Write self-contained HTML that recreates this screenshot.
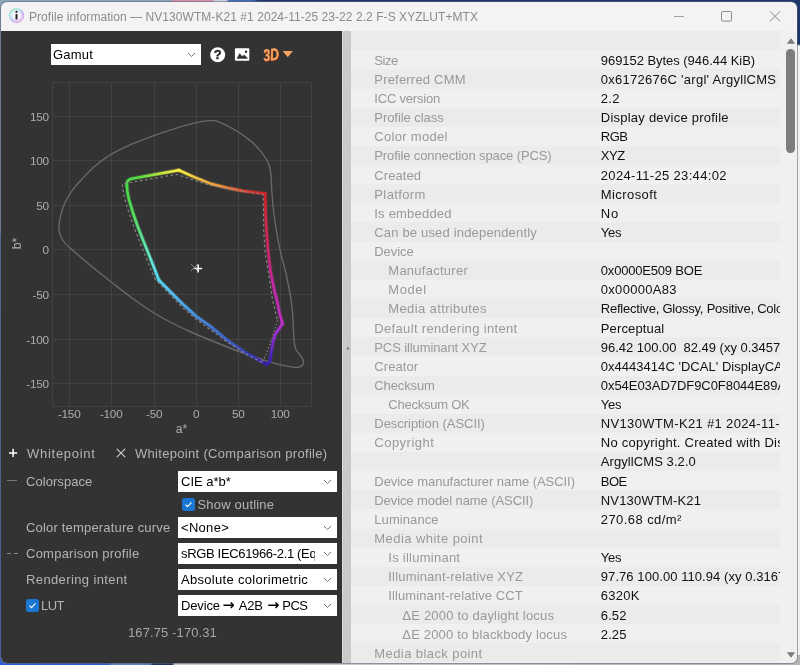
<!DOCTYPE html><html><head><meta charset="utf-8"><title>Profile information</title><style>

*{box-sizing:border-box;margin:0;padding:0}
html,body{width:800px;height:665px;overflow:hidden}
body{position:relative;font-family:"Liberation Sans",sans-serif;font-size:13px;background:#2a5db8;}
#root{position:absolute;left:0;top:0;width:800px;height:665px;will-change:transform}
.abs{position:absolute}
.t{position:absolute;white-space:pre;line-height:16px;height:16px}
#desk-top{left:0;top:0;width:800px;height:12px;background:linear-gradient(90deg,#8ca6b8 0,#8aa3b6 171px,#d48ea8 173px,#d690aa 212px,#cfd6e2 216px,#c8d2e0 226px,#4a74b4 229px,#3a66aa 254px,#1d3a70 258px,#1c376c 100%)}
#desk-left{left:0;top:0;width:12px;height:665px;background:linear-gradient(180deg,#8ca6b8 0,#8796a6 32px,#8a97a6 230px,#3f6fae 238px,#36659f 500px,#2c5fc4 600px,#2a5ccc 100%)}
#desk-right{left:790px;top:0;width:10px;height:665px;background:linear-gradient(180deg,#1c376c 0,#1b3366 44px,#f1f1f1 46px,#f1f1f1 100%)}
#desk-bottom{left:0;top:655px;width:800px;height:10px;background:linear-gradient(90deg,#2c60d0 0,#2a5cc8 108px,#5c82ba 112px,#5a80b8 150px,#1d2f5a 153px,#1d2f5a 172px,#cfcfcf 175px,#b4b4b4 100%)}
#win{border-radius:6px;background:#f4f2f2;overflow:hidden;box-shadow:0 0 0 1px rgba(90,100,120,.55)}
#title{left:28px;top:7px;color:#8b8b8b;font-size:12px;letter-spacing:.055px}
#left{left:0;width:341px;background:#333}
#sash{left:341px;width:9px;background:linear-gradient(90deg,#dcdcdc 0,#dcdcdc 1px,#c9c9c9 1px,#c9c9c9 100%)}
#right{left:350px;width:447px;background:#f0f0f0}
.lab{color:#b4b4b4}
.cb{position:absolute;background:#fff;height:21px;left:178px;width:159px;overflow:hidden}
.cb span{position:absolute;left:3px;top:2px;line-height:17px;color:#000;white-space:pre;font-size:13px}
.cb span.ar{font-family:"DejaVu Sans","Liberation Sans",sans-serif;font-weight:bold;font-size:14.5px;top:1.5px;letter-spacing:0}
.cb svg{position:absolute;right:5px;top:8px}
.cb i{position:absolute;right:0;top:0;width:22px;height:21px;background:#fff}
.chk{position:absolute;width:13px;height:13px;background:#1976d2;border-radius:2.5px}
.row{position:absolute;left:0;width:430px;}
.k{position:absolute;color:#999;white-space:pre;line-height:16px}
.v{position:absolute;color:#111;white-space:pre;line-height:16px;left:249.8px}

</style></head><body><div id="root">
<div class="abs" id="desk-top"></div><div class="abs" id="desk-left"></div><div class="abs" id="desk-right"></div><div class="abs" id="desk-bottom"></div>
<div class="abs" id="win" style="left:1px;top:2px;width:796px;height:661px">
<svg class="abs" style="left:7px;top:5px" width="17" height="17" viewBox="0 0 17 17"><defs><linearGradient id="ig" x1="0.1" y1="0" x2=".9" y2="1"><stop offset="0" stop-color="#9be89b"/><stop offset=".3" stop-color="#9adfe6"/><stop offset=".6" stop-color="#b9a6f0"/><stop offset="1" stop-color="#f5a6dc"/></linearGradient><radialGradient id="iw" cx=".5" cy=".5" r=".5"><stop offset="0" stop-color="#fff"/><stop offset=".55" stop-color="#fff" stop-opacity=".85"/><stop offset="1" stop-color="#fff" stop-opacity=".1"/></radialGradient></defs><circle cx="8.5" cy="8.5" r="7.6" fill="url(#ig)"/><circle cx="8.5" cy="8.5" r="7" fill="url(#iw)"/><circle cx="8.5" cy="4.9" r="1.15" fill="#222"/><rect x="7.5" y="7" width="2" height="5.6" rx=".5" fill="#222"/></svg>
<div class="t" id="title" style="left:28px;top:7px">Profile information — NV130WTM-K21 #1 2024-11-25 23-22 2.2 F-S XYZLUT+MTX</div>
<svg class="abs" style="left:659px;top:-1px" width="137" height="30" viewBox="0 0 137 30" fill="none" stroke="#8a8a8a" stroke-width="1"><path d="M14 15.5h10" stroke="#a0a0a0"/><rect x="61.5" y="10.5" width="10" height="9.6" rx="1.2"/><path d="M110 10.3l10 10M120 10.3l-10 10"/></svg>
<div class="abs" id="left" style="top:29px;height:632px"></div>
<div class="abs" id="sash" style="top:29px;height:632px"></div>
<div class="abs" id="right" style="top:29px;height:632px"></div>
</div>
<div class="cb" style="left:51px;top:44px;width:150px;height:21px"><span style="top:2px;left:2px;letter-spacing:0.23px">Gamut</span><i></i><svg width="9" height="6" viewBox="0 0 9 6" fill="none" stroke="#666" stroke-width="0.9"><path d="M1 1L4.5 4.5 8 1"/></svg></div>
<svg class="abs" style="left:209px;top:46px" width="18" height="18" viewBox="0 0 18 18"><circle cx="8.7" cy="8.8" r="7.5" fill="#fff"/><text x="8.7" y="13.3" font-family="Liberation Sans, sans-serif" font-weight="bold" font-size="13" text-anchor="middle" fill="#222" stroke="#222" stroke-width=".3">?</text></svg>
<svg class="abs" style="left:234px;top:48px" width="16" height="13" viewBox="0 0 16 13"><rect x=".9" y=".3" width="14.4" height="12.4" rx=".9" fill="#fff"/><path d="M3.1 10.4L5.7 5.5 7.9 8.5 10.4 7.1 13.6 10.4z" fill="#2e2e2e" stroke="#2e2e2e" stroke-width=".5" stroke-linejoin="round"/><circle cx="12" cy="3.8" r="1.25" fill="#2e2e2e"/></svg>
<svg class="abs" style="left:261px;top:45px" width="34" height="19" viewBox="0 0 34 19"><g font-family="Liberation Sans, sans-serif" font-weight="bold" font-style="italic" font-size="16.6" transform="rotate(-7 10 10)"><text x="2.9" y="16.1" fill="#7a2410" stroke="#7a2410" stroke-width=".6" textLength="15.6" lengthAdjust="spacingAndGlyphs">3D</text><text x="2.2" y="15.4" fill="#f6a260" stroke="#f6a260" stroke-width=".5" textLength="15.6" lengthAdjust="spacingAndGlyphs">3D</text></g><path d="M21.6 6.1h10.3l-5.15 6.1z" fill="#f6a260"/></svg>
<svg class="abs" style="left:0;top:70px" width="343" height="370" viewBox="0 70 343 370"><g stroke="#424242" stroke-width="1" fill="none" shape-rendering="crispEdges"><rect x="52.5" y="82.5" width="259" height="324"/><path d="M69.5 82V406"/><path d="M111.5 82V406"/><path d="M154.5 82V406"/><path d="M196.5 82V406"/><path d="M238.5 82V406"/><path d="M280.5 82V406"/><path d="M52 116.5H311"/><path d="M52 160.5H311"/><path d="M52 205.5H311"/><path d="M52 249.5H311"/><path d="M52 294.5H311"/><path d="M52 339.5H311"/><path d="M52 383.5H311"/></g><path d="M59.0 230.0C58.7 226.6 59.1 222.7 60.0 218.3C60.9 214.0 62.5 208.4 64.4 203.9C66.4 199.4 68.7 195.4 71.7 191.2C74.7 187.0 78.6 182.8 82.5 178.6C86.4 174.4 90.3 170.1 95.1 166.0C99.9 161.9 105.4 157.8 111.4 154.2C117.4 150.6 124.0 147.5 131.2 144.3C138.4 141.2 148.2 137.7 154.7 135.3C161.2 133.0 164.7 131.9 170.0 130.2C175.3 128.5 180.8 126.7 186.2 125.2C191.7 123.7 198.3 122.2 202.5 121.4C206.7 120.6 208.7 120.5 211.4 120.6C214.1 120.7 214.8 120.3 218.8 121.9C222.7 123.5 229.6 126.8 235.0 130.0C240.4 133.2 246.7 137.5 251.2 141.4C255.8 145.3 259.6 149.7 262.6 153.6C265.6 157.5 267.7 161.2 269.1 165.0C270.5 168.8 270.7 172.1 271.1 176.4C271.6 180.7 271.4 185.1 271.8 191.0C272.2 196.9 272.9 205.0 273.7 212.0C274.5 219.0 275.6 226.0 276.8 233.0C278.0 240.0 279.4 247.0 281.0 254.0C282.6 261.0 284.7 267.7 286.3 275.0C287.9 282.3 289.8 291.8 290.8 298.0C291.8 304.2 292.1 307.0 292.5 312.5C292.9 318.0 293.2 326.0 293.5 331.2C293.8 336.5 293.9 340.6 294.4 343.8C294.9 346.9 295.3 348.1 296.2 350.0C297.2 351.9 298.9 353.3 300.0 355.0C301.1 356.7 302.6 358.4 303.1 360.0C303.6 361.6 303.8 363.2 303.1 364.4C302.4 365.6 300.7 366.8 298.8 367.2C296.8 367.7 294.6 367.4 291.2 366.9C287.9 366.4 284.0 365.8 278.8 364.4C273.5 363.0 267.3 361.1 260.0 358.8C252.7 356.4 243.3 353.1 235.0 350.0C226.7 346.9 217.5 343.1 210.0 340.0C202.5 336.9 196.7 334.5 190.0 331.5C183.3 328.5 176.7 325.5 170.0 322.0C163.3 318.5 156.7 314.8 150.0 310.5C143.3 306.2 136.7 301.4 130.0 296.5C123.3 291.6 116.7 286.2 110.0 281.0C103.3 275.8 96.7 270.5 90.0 265.0C83.3 259.5 74.7 252.3 70.0 248.0C65.3 243.7 63.8 242.0 62.0 239.0C60.2 236.0 59.3 233.4 59.0 230.0Z" fill="none" stroke="#686868" stroke-width="1.4"/><defs><linearGradient id="s0" gradientUnits="userSpaceOnUse" x1="126.9" y1="186" x2="178.8" y2="170.2"><stop offset="0.000" stop-color="#4ad84a"/><stop offset="0.250" stop-color="#55dc44"/><stop offset="0.500" stop-color="#8ee23e"/><stop offset="0.750" stop-color="#cfe840"/><stop offset="1.000" stop-color="#f8f040"/></linearGradient><linearGradient id="s1" gradientUnits="userSpaceOnUse" x1="178.8" y1="170.2" x2="265.2" y2="193.6"><stop offset="0.000" stop-color="#f8f040"/><stop offset="0.167" stop-color="#f2d040"/><stop offset="0.333" stop-color="#f0b040"/><stop offset="0.500" stop-color="#f09038"/><stop offset="0.667" stop-color="#e86838"/><stop offset="0.833" stop-color="#da3430"/><stop offset="1.000" stop-color="#cc2428"/></linearGradient><linearGradient id="s2" gradientUnits="userSpaceOnUse" x1="265.2" y1="193.6" x2="282.5" y2="323.75"><stop offset="0.000" stop-color="#cc2428"/><stop offset="0.167" stop-color="#d02840"/><stop offset="0.333" stop-color="#cc2858"/><stop offset="0.500" stop-color="#c82878"/><stop offset="0.667" stop-color="#c828a0"/><stop offset="0.833" stop-color="#c42cb4"/><stop offset="1.000" stop-color="#bc2ec4"/></linearGradient><linearGradient id="s3" gradientUnits="userSpaceOnUse" x1="282.5" y1="323.75" x2="266.9" y2="364.4"><stop offset="0.000" stop-color="#ba2ec6"/><stop offset="0.200" stop-color="#a030d0"/><stop offset="0.400" stop-color="#8a2cd0"/><stop offset="0.600" stop-color="#7028c8"/><stop offset="0.800" stop-color="#4a22bc"/><stop offset="1.000" stop-color="#3820b0"/></linearGradient><linearGradient id="s4" gradientUnits="userSpaceOnUse" x1="266.9" y1="364.4" x2="158.75" y2="280"><stop offset="0.000" stop-color="#3820b4"/><stop offset="0.143" stop-color="#3838bc"/><stop offset="0.286" stop-color="#3c58c8"/><stop offset="0.429" stop-color="#4070d2"/><stop offset="0.571" stop-color="#4688de"/><stop offset="0.714" stop-color="#4ca4ea"/><stop offset="0.857" stop-color="#50c0f0"/><stop offset="1.000" stop-color="#54d4f0"/></linearGradient><linearGradient id="s5" gradientUnits="userSpaceOnUse" x1="158.75" y1="280" x2="126.9" y2="186"><stop offset="0.000" stop-color="#58d8f0"/><stop offset="0.143" stop-color="#60e2e0"/><stop offset="0.286" stop-color="#66e8c0"/><stop offset="0.429" stop-color="#60e8a0"/><stop offset="0.571" stop-color="#58e278"/><stop offset="0.714" stop-color="#56e05c"/><stop offset="0.857" stop-color="#4edc50"/><stop offset="1.000" stop-color="#4ad84a"/></linearGradient></defs><path d="M126.9 186.0 L126.8 183.0 L127.6 181.0 L129.6 179.4 L131.2 178.8 L155.0 174.4 L178.8 170.2" fill="none" stroke="url(#s0)" stroke-opacity=".28" stroke-width="4.4" stroke-linecap="round" stroke-linejoin="round"/><path d="M178.8 170.2 L194.4 177.2 L210.6 183.7 L226.9 187.8 L243.1 191.0 L259.4 193.0 L265.2 193.6" fill="none" stroke="url(#s1)" stroke-opacity=".28" stroke-width="4.4" stroke-linecap="round" stroke-linejoin="round"/><path d="M265.2 193.6 L265.5 212.0 L266.7 233.0 L268.0 250.0 L270.5 271.0 L274.7 292.0 L276.9 300.0 L279.4 312.5 L282.5 323.8" fill="none" stroke="url(#s2)" stroke-opacity=".28" stroke-width="4.4" stroke-linecap="round" stroke-linejoin="round"/><path d="M282.5 323.8 L275.6 333.8 L273.1 341.2 L271.2 352.5 L270.0 361.2 L266.9 364.4" fill="none" stroke="url(#s3)" stroke-opacity=".28" stroke-width="4.4" stroke-linecap="round" stroke-linejoin="round"/><path d="M266.9 364.4 L247.5 353.8 L228.8 341.2 L210.0 326.0 L196.2 316.2 L183.8 305.0 L171.2 292.5 L158.8 280.0" fill="none" stroke="url(#s4)" stroke-opacity=".28" stroke-width="4.4" stroke-linecap="round" stroke-linejoin="round"/><path d="M158.8 280.0 L154.1 267.7 L148.7 254.1 L143.3 240.6 L137.9 227.0 L133.2 213.5 L129.1 200.0 L127.5 192.5 L126.9 186.0" fill="none" stroke="url(#s5)" stroke-opacity=".28" stroke-width="4.4" stroke-linecap="round" stroke-linejoin="round"/><path d="M126.9 186.0 L126.8 183.0 L127.6 181.0 L129.6 179.4 L131.2 178.8 L155.0 174.4 L178.8 170.2" fill="none" stroke="url(#s0)" stroke-width="2.5" stroke-linecap="round" stroke-linejoin="round"/><path d="M178.8 170.2 L194.4 177.2 L210.6 183.7 L226.9 187.8 L243.1 191.0 L259.4 193.0 L265.2 193.6" fill="none" stroke="url(#s1)" stroke-width="2.5" stroke-linecap="round" stroke-linejoin="round"/><path d="M265.2 193.6 L265.5 212.0 L266.7 233.0 L268.0 250.0 L270.5 271.0 L274.7 292.0 L276.9 300.0 L279.4 312.5 L282.5 323.8" fill="none" stroke="url(#s2)" stroke-width="2.5" stroke-linecap="round" stroke-linejoin="round"/><path d="M282.5 323.8 L275.6 333.8 L273.1 341.2 L271.2 352.5 L270.0 361.2 L266.9 364.4" fill="none" stroke="url(#s3)" stroke-width="2.5" stroke-linecap="round" stroke-linejoin="round"/><path d="M266.9 364.4 L247.5 353.8 L228.8 341.2 L210.0 326.0 L196.2 316.2 L183.8 305.0 L171.2 292.5 L158.8 280.0" fill="none" stroke="url(#s4)" stroke-width="2.5" stroke-linecap="round" stroke-linejoin="round"/><path d="M158.8 280.0 L154.1 267.7 L148.7 254.1 L143.3 240.6 L137.9 227.0 L133.2 213.5 L129.1 200.0 L127.5 192.5 L126.9 186.0" fill="none" stroke="url(#s5)" stroke-width="2.5" stroke-linecap="round" stroke-linejoin="round"/><path d="M155.5 279.8 L150.1 267.7 L144.7 254.1 L139.2 240.6 L133.8 227.0 L129.1 213.5 L125.0 200.0 L123.1 191.2 L122.3 184.0 L176.2 174.4 L182.5 176.2 L195.0 180.6 L210.0 185.0 L236.0 190.5 L263.2 194.4 L263.8 233.0 L265.3 254.0 L268.8 275.0 L272.6 300.5 L277.5 320.6" fill="none" stroke="#8a8a8a" stroke-width="1.1" stroke-dasharray="2.6 2.6"/><path d="M262.0 362.5 L247.5 355.0 L228.8 343.0 L210.0 329.4 L196.0 319.0 L183.0 308.0 L171.2 295.6 L155.5 279.8" fill="none" stroke="#8a8a8a" stroke-width="1.1" stroke-dasharray="2.6 2.6"/><path d="M277.5 320.6L271.5 340 267 352 262 362.5" fill="none" stroke="#8a8a8a" stroke-width="1.1" stroke-dasharray="1.3 2.2"/><path d="M190.9 264l7 7M197.9 264l-7 7" stroke="#8c8c8c" stroke-width="1" fill="none"/><path d="M198.2 264.4v8.2M194.3 268.5h7.8" stroke="#fff" stroke-width="1.6" fill="none"/><g font-family="Liberation Sans, sans-serif" font-size="11.8" letter-spacing="-.3" fill="#adadad"><text x="48.7" y="120.7" text-anchor="end">150</text><text x="48.7" y="164.7" text-anchor="end">100</text><text x="48.7" y="209.7" text-anchor="end">50</text><text x="48.7" y="253.7" text-anchor="end">0</text><text x="48.7" y="298.7" text-anchor="end">-50</text><text x="48.7" y="343.7" text-anchor="end">-100</text><text x="48.7" y="387.7" text-anchor="end">-150</text><text x="69.2" y="417.8" text-anchor="middle">-150</text><text x="111.2" y="417.8" text-anchor="middle">-100</text><text x="154.2" y="417.8" text-anchor="middle">-50</text><text x="196.2" y="417.8" text-anchor="middle">0</text><text x="238.2" y="417.8" text-anchor="middle">50</text><text x="280.2" y="417.8" text-anchor="middle">100</text><text x="181.6" y="432.6" text-anchor="middle" font-size="12.3" letter-spacing="0">a*</text><text transform="translate(20.6 243.5) rotate(-90)" text-anchor="middle" font-size="12.3" letter-spacing="0">b*</text></g></svg>
<svg class="abs" style="left:8px;top:448px" width="10" height="10" viewBox="0 0 10 10"><path d="M5.1 .8v8.2M1 4.9h8.2" stroke="#fff" stroke-width="1.5"/></svg>
<div class="t lab" style="left:27px;top:445.5px;letter-spacing:0.724px;">Whitepoint</div>
<svg class="abs" style="left:115.6px;top:448.4px" width="10" height="10" viewBox="0 0 10 10"><path d="M.8.8l8.4 8.4M9.2.8L.8 9.2" stroke="#d0d0d0" stroke-width="1.15"/></svg>
<div class="t lab" style="left:135px;top:445.5px;letter-spacing:0.312px;">Whitepoint (Comparison profile)</div>
<div class="abs" style="left:7px;top:480px;width:10px;height:1px;background:#777"></div>
<div class="t lab" style="left:26px;top:473.5px;letter-spacing:0.056px;">Colorspace</div>
<div class="cb" style="top:471px"><span style="letter-spacing:-0.01px">CIE a*b*</span><i></i><svg width="9" height="6" viewBox="0 0 9 6" fill="none" stroke="#666" stroke-width="0.9"><path d="M1 1L4.5 4.5 8 1"/></svg></div>
<div class="chk" style="left:182px;top:498px"><svg width="13" height="13" viewBox="0 0 13 13" style="display:block"><path d="M3.5 6.6l2 2 4-4.2" fill="none" stroke="#fff" stroke-width="1.1"/></svg></div>
<div class="t lab" style="left:197.5px;top:497px;letter-spacing:0.187px;">Show outline</div>
<div class="t lab" style="left:26px;top:520px;letter-spacing:0.183px;">Color temperature curve</div>
<div class="cb" style="top:517px"><span style="letter-spacing:0.297px">&lt;None&gt;</span><i></i><svg width="9" height="6" viewBox="0 0 9 6" fill="none" stroke="#666" stroke-width="0.9"><path d="M1 1L4.5 4.5 8 1"/></svg></div>
<div class="abs" style="left:7px;top:553px;width:4px;height:1px;background:#888"></div><div class="abs" style="left:14px;top:553px;width:4px;height:1px;background:#888"></div>
<div class="t lab" style="left:26px;top:545.7px;letter-spacing:0.239px;">Comparison profile</div>
<div class="cb" style="top:543px"><span style="letter-spacing:-0.335px">sRGB IEC61966-2.1 (Equivalent</span><i></i><svg width="9" height="6" viewBox="0 0 9 6" fill="none" stroke="#666" stroke-width="0.9"><path d="M1 1L4.5 4.5 8 1"/></svg></div>
<div class="t lab" style="left:26px;top:571.5px;letter-spacing:0.38px;">Rendering intent</div>
<div class="cb" style="top:569px"><span style="letter-spacing:0.309px">Absolute colorimetric</span><i></i><svg width="9" height="6" viewBox="0 0 9 6" fill="none" stroke="#666" stroke-width="0.9"><path d="M1 1L4.5 4.5 8 1"/></svg></div>
<div class="chk" style="left:26px;top:599px"><svg width="13" height="13" viewBox="0 0 13 13" style="display:block"><path d="M3.5 6.6l2 2 4-4.2" fill="none" stroke="#fff" stroke-width="1.1"/></svg></div>
<div class="t lab" style="left:41px;top:598px;letter-spacing:-0.5px;">LUT</div>
<div class="cb" style="top:595px"><span style="letter-spacing:-0.155px">Device</span><span class="ar" style="left:44.4px">→</span><span style="left:60.7px;letter-spacing:-0.111px">A2B</span><span class="ar" style="left:89.2px">→</span><span style="left:104.3px;letter-spacing:-0.5px">PCS</span><i></i><svg width="9" height="6" viewBox="0 0 9 6" fill="none" stroke="#666" stroke-width="0.9"><path d="M1 1L4.5 4.5 8 1"/></svg></div>
<div class="t lab" style="left:128px;top:624.7px;letter-spacing:0.106px;color:#a6a6a6">167.75 -170.31</div>
<div class="abs" style="left:351px;top:31px;width:429px;height:632px;overflow:hidden">
<div class="row" style="top:0.17px;height:19.18px;background:#ebebeb"></div>
<div class="row" style="top:19.30px;height:19.18px;background:#f0f0f0"></div>
<div class="row" style="top:38.43px;height:19.18px;background:#ebebeb"></div>
<div class="row" style="top:57.56px;height:19.18px;background:#f0f0f0"></div>
<div class="row" style="top:76.69px;height:19.18px;background:#ebebeb"></div>
<div class="row" style="top:95.82px;height:19.18px;background:#f0f0f0"></div>
<div class="row" style="top:114.95px;height:19.18px;background:#ebebeb"></div>
<div class="row" style="top:134.08px;height:19.18px;background:#f0f0f0"></div>
<div class="row" style="top:153.21px;height:19.18px;background:#ebebeb"></div>
<div class="row" style="top:172.34px;height:19.18px;background:#f0f0f0"></div>
<div class="row" style="top:191.47px;height:19.18px;background:#ebebeb"></div>
<div class="row" style="top:210.60px;height:19.18px;background:#f0f0f0"></div>
<div class="row" style="top:229.73px;height:19.18px;background:#ebebeb"></div>
<div class="row" style="top:248.86px;height:19.18px;background:#f0f0f0"></div>
<div class="row" style="top:267.99px;height:19.18px;background:#ebebeb"></div>
<div class="row" style="top:287.12px;height:19.18px;background:#f0f0f0"></div>
<div class="row" style="top:306.25px;height:19.18px;background:#ebebeb"></div>
<div class="row" style="top:325.38px;height:19.18px;background:#f0f0f0"></div>
<div class="row" style="top:344.51px;height:19.18px;background:#ebebeb"></div>
<div class="row" style="top:363.64px;height:19.18px;background:#f0f0f0"></div>
<div class="row" style="top:382.77px;height:19.18px;background:#ebebeb"></div>
<div class="row" style="top:401.90px;height:19.18px;background:#f0f0f0"></div>
<div class="row" style="top:421.03px;height:19.18px;background:#ebebeb"></div>
<div class="row" style="top:440.16px;height:19.18px;background:#f0f0f0"></div>
<div class="row" style="top:459.29px;height:19.18px;background:#ebebeb"></div>
<div class="row" style="top:478.42px;height:19.18px;background:#f0f0f0"></div>
<div class="row" style="top:497.55px;height:19.18px;background:#ebebeb"></div>
<div class="row" style="top:516.68px;height:19.18px;background:#f0f0f0"></div>
<div class="row" style="top:535.81px;height:19.18px;background:#ebebeb"></div>
<div class="row" style="top:554.94px;height:19.18px;background:#f0f0f0"></div>
<div class="row" style="top:574.07px;height:19.18px;background:#ebebeb"></div>
<div class="row" style="top:593.20px;height:19.18px;background:#f0f0f0"></div>
<div class="row" style="top:612.33px;height:19.18px;background:#ebebeb"></div>
<div class="row" style="top:631.46px;height:19.18px;background:#f0f0f0"></div>
<div class="k" style="left:23.3px;top:21.76px;letter-spacing:-0.428px">Size</div>
<div class="v" style="top:21.76px;letter-spacing:-0.045px">969152 Bytes (946.44 KiB)</div>
<div class="k" style="left:23.3px;top:40.89px;letter-spacing:0.195px">Preferred CMM</div>
<div class="v" style="top:40.89px;letter-spacing:0.265px">0x6172676C 'argl' ArgyllCMS</div>
<div class="k" style="left:23.3px;top:60.02px;letter-spacing:-0.202px">ICC version</div>
<div class="v" style="top:60.02px;letter-spacing:0.289px">2.2</div>
<div class="k" style="left:23.3px;top:79.16px;letter-spacing:-0.062px">Profile class</div>
<div class="v" style="top:79.16px;letter-spacing:0.231px">Display device profile</div>
<div class="k" style="left:23.3px;top:98.28px;letter-spacing:0.305px">Color model</div>
<div class="v" style="top:98.28px;letter-spacing:-0.5px">RGB</div>
<div class="k" style="left:23.3px;top:117.41px;letter-spacing:-0.114px">Profile connection space (PCS)</div>
<div class="v" style="top:117.41px;letter-spacing:-0.5px">XYZ</div>
<div class="k" style="left:23.3px;top:136.54px;letter-spacing:0.085px">Created</div>
<div class="v" style="top:136.54px;letter-spacing:0.327px">2024-11-25 23:44:02</div>
<div class="k" style="left:23.3px;top:155.67px;letter-spacing:0.386px">Platform</div>
<div class="v" style="top:155.67px;letter-spacing:0.419px">Microsoft</div>
<div class="k" style="left:23.3px;top:174.80px;letter-spacing:0.203px">Is embedded</div>
<div class="v" style="top:174.80px;letter-spacing:0.9px">No</div>
<div class="k" style="left:23.3px;top:193.93px;letter-spacing:0.174px">Can be used independently</div>
<div class="v" style="top:193.93px;letter-spacing:-0.208px">Yes</div>
<div class="k" style="left:23.3px;top:213.06px;letter-spacing:-0.082px">Device</div>
<div class="k" style="left:37.3px;top:232.19px;letter-spacing:0.257px">Manufacturer</div>
<div class="v" style="top:232.19px;letter-spacing:-0.191px">0x0000E509 BOE</div>
<div class="k" style="left:37.3px;top:251.33px;letter-spacing:0.584px">Model</div>
<div class="v" style="top:251.33px;letter-spacing:0.293px">0x00000A83</div>
<div class="k" style="left:37.3px;top:270.45px;letter-spacing:0.374px">Media attributes</div>
<div class="v" style="top:270.45px;letter-spacing:-0.222px">Reflective, Glossy, Positive, Color</div>
<div class="k" style="left:23.3px;top:289.58px;letter-spacing:0.336px">Default rendering intent</div>
<div class="v" style="top:289.58px;letter-spacing:0.141px">Perceptual</div>
<div class="k" style="left:23.3px;top:308.71px;letter-spacing:-0.106px">PCS illuminant XYZ</div>
<div class="v" style="top:308.71px;letter-spacing:-0.023px">96.42 100.00  82.49 (xy 0.3457 0.3585)</div>
<div class="k" style="left:23.3px;top:327.84px;letter-spacing:0.068px">Creator</div>
<div class="v" style="top:327.84px;letter-spacing:0.027px">0x4443414C 'DCAL' DisplayCAL</div>
<div class="k" style="left:23.3px;top:346.97px;letter-spacing:-0.116px">Checksum</div>
<div class="v" style="top:346.97px;letter-spacing:-0.048px">0x54E03AD7DF9C0F8044E89A4B</div>
<div class="k" style="left:37.3px;top:366.10px;letter-spacing:-0.239px">Checksum OK</div>
<div class="v" style="top:366.10px;letter-spacing:-0.208px">Yes</div>
<div class="k" style="left:23.3px;top:385.23px;letter-spacing:-0.038px">Description (ASCII)</div>
<div class="v" style="top:385.23px;letter-spacing:0.336px">NV130WTM-K21 #1 2024-11-25</div>
<div class="k" style="left:23.3px;top:404.36px;letter-spacing:0.489px">Copyright</div>
<div class="v" style="top:404.36px;letter-spacing:0.253px">No copyright. Created with DisplayCAL</div>
<div class="v" style="top:423.49px;letter-spacing:0.081px">ArgyllCMS 3.2.0</div>
<div class="k" style="left:23.3px;top:442.62px;letter-spacing:-0.051px">Device manufacturer name (ASCII)</div>
<div class="v" style="top:442.62px;letter-spacing:-0.5px">BOE</div>
<div class="k" style="left:23.3px;top:461.75px;letter-spacing:-0.087px">Device model name (ASCII)</div>
<div class="v" style="top:461.75px;letter-spacing:0.178px">NV130WTM-K21</div>
<div class="k" style="left:23.3px;top:480.88px;letter-spacing:0.081px">Luminance</div>
<div class="v" style="top:480.88px;letter-spacing:0.428px">270.68 cd/m²</div>
<div class="k" style="left:23.3px;top:500.01px;letter-spacing:0.45px">Media white point</div>
<div class="k" style="left:37.3px;top:519.14px;letter-spacing:0.253px">Is illuminant</div>
<div class="v" style="top:519.14px;letter-spacing:-0.208px">Yes</div>
<div class="k" style="left:37.3px;top:538.27px;letter-spacing:0.179px">Illuminant-relative XYZ</div>
<div class="v" style="top:538.27px;letter-spacing:0.066px">97.76 100.00 110.94 (xy 0.3167 0.3240)</div>
<div class="k" style="left:37.3px;top:557.40px;letter-spacing:0.102px">Illuminant-relative CCT</div>
<div class="v" style="top:557.40px;letter-spacing:0.268px">6320K</div>
<div class="k" style="left:51.3px;top:576.53px;letter-spacing:0.207px">ΔE 2000 to daylight locus</div>
<div class="v" style="top:576.53px;letter-spacing:0.111px">6.52</div>
<div class="k" style="left:51.3px;top:595.66px;letter-spacing:0.167px">ΔE 2000 to blackbody locus</div>
<div class="v" style="top:595.66px;letter-spacing:0.111px">2.25</div>
<div class="k" style="left:23.3px;top:614.79px;letter-spacing:0.414px">Media black point</div>
</div>
<div class="abs" style="left:780px;top:31px;width:17px;height:624px;background:#f0f0f0"></div>
<div class="abs" style="left:786px;top:49px;width:8.5px;height:104px;background:#7c7c7c;border-radius:4.2px"></div>
<svg class="abs" style="left:785.5px;top:37px" width="10" height="8" viewBox="0 0 10 8"><path d="M5 1.9L8.3 6.2H1.7z" fill="#7c7c7c" stroke="#7c7c7c" stroke-width="1" stroke-linejoin="round"/></svg>
<svg class="abs" style="left:785.5px;top:651px" width="10" height="8" viewBox="0 0 10 8"><path d="M5 6.1L8.3 1.8H1.7z" fill="#7c7c7c" stroke="#7c7c7c" stroke-width="1" stroke-linejoin="round"/></svg>
<svg class="abs" style="left:346px;top:345px" width="5" height="7" viewBox="0 0 5 7"><path d="M1 1.6L3.6 3.4 1 5.2z" fill="#7a7a7a"/></svg>
</div></body></html>
